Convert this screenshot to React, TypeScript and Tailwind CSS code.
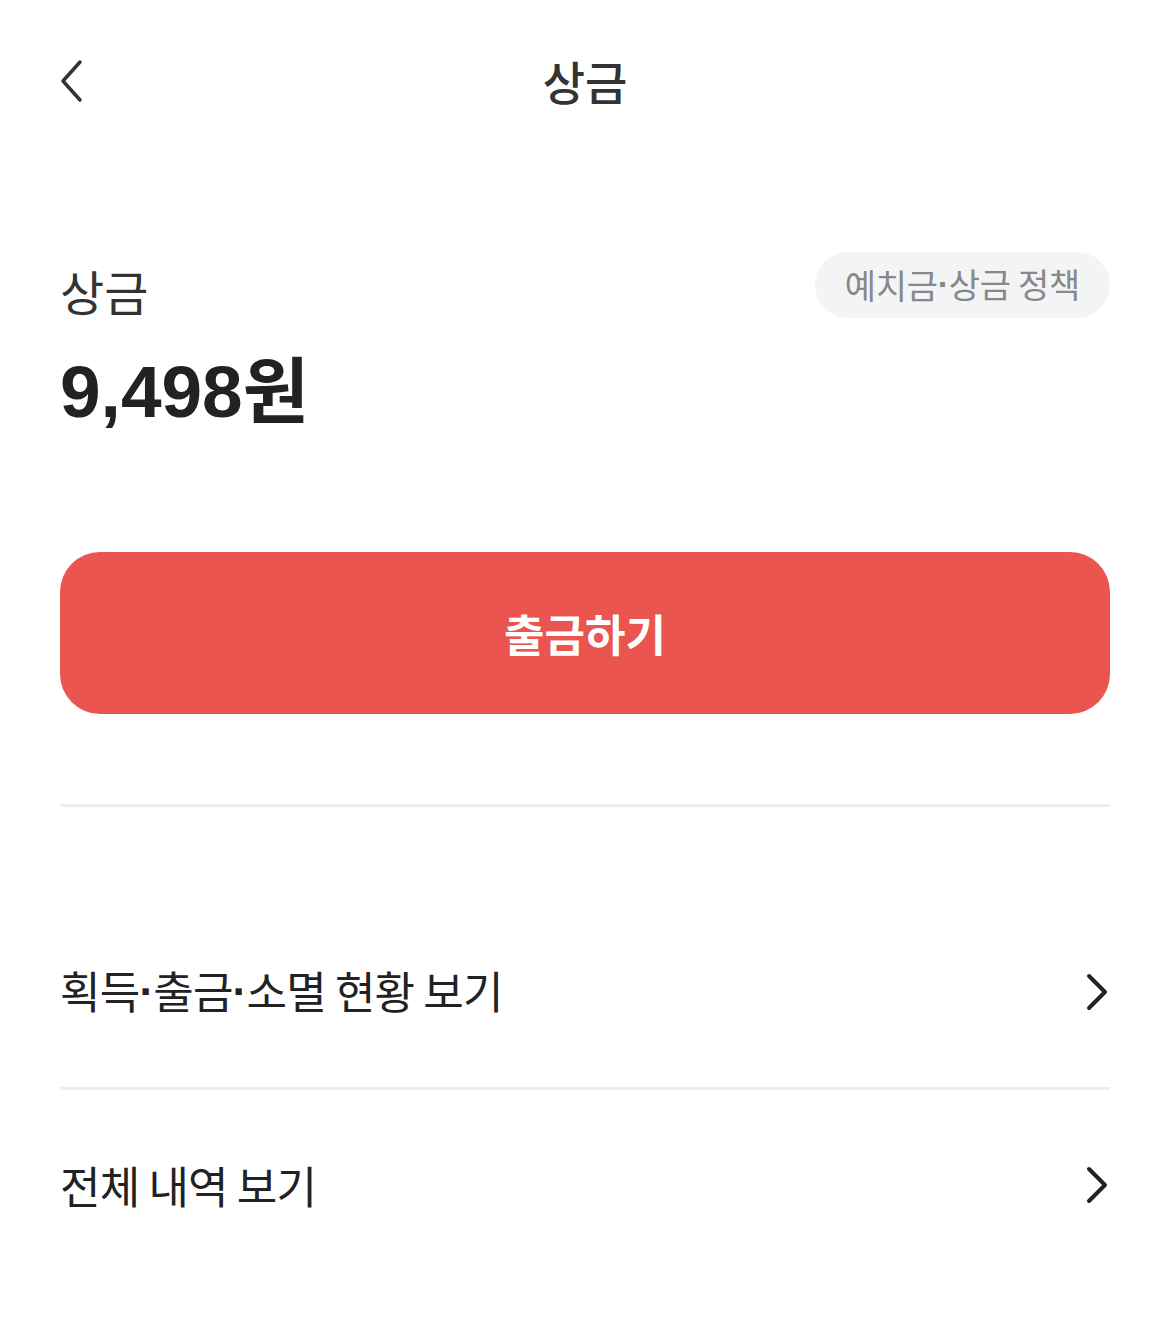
const font = "font-['Noto_Sans_CJK_KR','Noto_Sans',sans-serif]";

// narrow middle dot, like the reference's system font
const Dot = () => (
  <span className="relative -top-[2px] font-['Liberation_Sans',sans-serif] font-bold">·</span>
);

const withDots = (text: string) =>
  text.split("·").map((part, i) => (
    <span key={i}>
      {i > 0 && <Dot />}
      {part}
    </span>
  ));

const ChevronRight = () => (
  <svg width="26" height="40" viewBox="0 0 26 40" fill="none">
    <path
      d="M5 4 L21 20 L5 36"
      stroke="#222222"
      strokeWidth="4"
      strokeLinecap="round"
      strokeLinejoin="round"
    />
  </svg>
);

const MenuRow = ({ label }: { label: string }) => (
  <div className="flex h-[190px] items-center justify-between">
    <span className="text-[44px] leading-none tracking-[-0.8px] text-[#222222]">
      {withDots(label)}
    </span>
    <ChevronRight />
  </div>
);

export default function App() {
  return (
    <div className={`min-h-[1323px] w-[1170px] bg-white ${font}`}>
      {/* header */}
      <header className="relative flex h-[160px] items-center justify-center">
        <button className="absolute left-[58px] top-[58px]">
          <svg width="28" height="46" viewBox="0 0 28 46" fill="none">
            <path
              d="M22 4 L5 23 L22 42"
              stroke="#333333"
              strokeWidth="3.5"
              strokeLinecap="round"
              strokeLinejoin="round"
            />
          </svg>
        </button>
        <h1 className="text-[46px] font-medium leading-none text-[#333333]">상금</h1>
      </header>

      <main className="px-[60px]">
        {/* balance */}
        <section className="mt-[92px] flex items-start justify-between">
          <div className="flex flex-col">
            <span className="mt-[14px] text-[48px] leading-none text-[#333333]">상금</span>
            <span className="mt-[36px] text-[70px] font-bold leading-none text-[#222222]">
              <span className="font-['Liberation_Sans',sans-serif] text-[73px]">9,498</span>
              <span className="text-[72px]">원</span>
            </span>
          </div>
          <button className="flex h-[66px] items-center rounded-full bg-[#f3f4f6] px-[30px] text-[34px] leading-none tracking-[-0.3px] text-[#888888]">
            {withDots("예치금·상금 정책")}
          </button>
        </section>

        <button className="mt-[124px] flex h-[162px] w-full items-center justify-center rounded-[40px] bg-[#eb5550] text-[44px] font-bold leading-none text-white">
          출금하기
        </button>

        <div className="mt-[90px] h-[3px] bg-[#eeeeee]" />

        <div className="mt-[90px]">
          <MenuRow label="획득·출금·소멸 현황 보기" />
          <div className="h-[3px] bg-[#eeeeee]" />
          <MenuRow label="전체 내역 보기" />
        </div>
      </main>
    </div>
  );
}
